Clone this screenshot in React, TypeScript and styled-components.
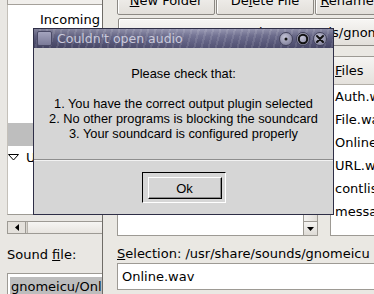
import React from 'react'
import styled, { createGlobalStyle } from 'styled-components'

const uiFont = `'DejaVu Sans', 'Bitstream Vera Sans', sans-serif`
const dialogFont = `'Liberation Sans', Arial, sans-serif`

const GlobalStyle = createGlobalStyle`
  html, body {
    margin: 0;
    padding: 0;
    background: #eae8e3;
    overflow: hidden;
  }
`

const Desktop = styled.div`
  position: relative;
  width: 374px;
  height: 294px;
  overflow: hidden;
  background: #eae8e3;
  font-family: ${uiFont};
  font-size: 13px;
  color: #000;
`

const Mn = styled.span`
  text-decoration: underline;
  text-underline-offset: 1px;
`

/* ---------- sound preferences window (left, behind) ---------- */

const PrefsWindow = styled.div`
  position: absolute;
  left: 0;
  top: 0;
  width: 220px;
  height: 294px;
  box-sizing: border-box;
  padding-left: 7px;
  background: #e9e7e3;
  display: flex;
  flex-direction: column;
`

const TopFrame = styled.div`
  height: 5px;
  flex: none;
  box-sizing: border-box;
  border-left: 1px solid #a5a19b;
  border-bottom: 1px solid #a5a19b;
  background: #f1efec;
`

const TreeView = styled.div`
  height: 210px;
  flex: none;
  box-sizing: border-box;
  padding-top: 3px;
  background: #fff;
  border-left: 1px solid #c4c0b9;
  border-bottom: 1px solid #9d9a94;
  display: flex;
  flex-direction: column;
  overflow: hidden;
`

const TreeRow = styled.div<{ $indent: number; $selected?: boolean }>`
  height: 23px;
  flex: none;
  display: flex;
  align-items: center;
  gap: 7px;
  padding-left: ${p => p.$indent}px;
  background: ${p => (p.$selected ? '#bebebe' : 'transparent')};
  white-space: nowrap;
`

const HScroll = styled.div`
  margin-top: 6px;
  height: 13px;
  flex: none;
  box-sizing: border-box;
  border: 1px solid #9d9a94;
  background: #d9d6d0;
  display: flex;
`

const ScrollArrow = styled.div<{ $side: 'left' | 'right' }>`
  width: 17px;
  flex: none;
  display: flex;
  align-items: center;
  justify-content: center;
  background: #e4e1dc;
  border-${p => (p.$side === 'left' ? 'right' : 'left')}: 1px solid #9d9a94;
`

const ScrollThumb = styled.div`
  flex: 1;
  margin: 0 0 0 1px;
  background: linear-gradient(#f6f5f3, #e8e5e0);
  border-left: 1px solid #b8b4ad;
`

const FieldLabel = styled.div<{ $gap: number }>`
  margin-top: ${p => p.$gap}px;
  height: 15px;
  line-height: 15px;
  flex: none;
  white-space: nowrap;
`

const Entry = styled.div<{ $gap: number }>`
  margin-top: ${p => p.$gap}px;
  height: 27px;
  flex: none;
  box-sizing: border-box;
  border: 1px solid #9d9a94;
  background: #fff;
  display: flex;
  align-items: center;
  padding-left: 4px;
  white-space: nowrap;
  overflow: hidden;
`

const PrefsEntry = styled(Entry)`
  align-items: flex-start;
  padding: 3px 0 0 2px;
`

const Highlight = styled.span`
  background: #bdbdbd;
  line-height: 19px;
  padding: 0 1px;
`

/* ---------- file chooser window (middle) ---------- */

const ChooserWindow = styled.div`
  position: absolute;
  left: 102px;
  top: -14px;
  width: 300px;
  height: 320px;
  box-sizing: border-box;
  border-left: 1px solid #6f6c67;
  background: #eae8e3;
  padding-left: 14px;
  display: flex;
  flex-direction: column;
`

const ButtonRow = styled.div`
  display: flex;
  gap: 1px;
  height: 29px;
  flex: none;
`

const GtkButton = styled.div<{ $width: number }>`
  width: ${p => p.$width}px;
  flex: none;
  box-sizing: border-box;
  border: 1px solid #8c8984;
  border-radius: 2px;
  background: linear-gradient(#f7f6f4, #e2dfda);
  box-shadow: inset 1px 1px 0 #fff;
  display: flex;
  align-items: center;
  justify-content: center;
  white-space: nowrap;
  overflow: hidden;
`

const Combo = styled(GtkButton)`
  margin: 3px 0 0 1px;
  height: 28px;
  justify-content: flex-start;
  padding-left: 104px;
`

const Lists = styled.div`
  margin-top: 10px;
  height: 180px;
  flex: none;
  display: flex;
`

const FolderList = styled.div`
  width: 187px;
  flex: none;
  box-sizing: border-box;
  border: 1px solid #9d9a94;
  background: #fff;
`

const VScroll = styled.div`
  width: 14px;
  flex: none;
  box-sizing: border-box;
  border: 1px solid #9d9a94;
  border-left: none;
  background: #d2cfc9;
  display: flex;
  flex-direction: column;
  justify-content: flex-end;
`

const VThumb = styled.div`
  height: 8px;
  background: linear-gradient(90deg, #f4f3f1, #e2dfda);
  border-bottom: 1px solid #9d9a94;
`

const VArrow = styled.div`
  height: 13px;
  display: flex;
  align-items: center;
  justify-content: center;
  background: linear-gradient(#f4f3f1, #dedbd6);
`

const FilesList = styled.div`
  margin-left: 12px;
  flex: 1;
  box-sizing: border-box;
  border: 1px solid #9d9a94;
  background: #fff;
  display: flex;
  flex-direction: column;
`

const FilesHeader = styled.div`
  height: 28px;
  flex: none;
  box-sizing: border-box;
  padding-left: 4px;
  display: flex;
  align-items: center;
  background: linear-gradient(#f5f4f2, #e4e1dc);
  border-bottom: 1px solid #b3afa8;
`

const FileRow = styled.div`
  height: 23px;
  flex: none;
  padding-left: 4px;
  display: flex;
  align-items: center;
  white-space: nowrap;
`

/* ---------- alert dialog (front) ---------- */

const Alert = styled.div`
  position: absolute;
  left: 33px;
  top: 28px;
  width: 301px;
  height: 187px;
  box-sizing: border-box;
  border: 1px solid #2e2e46;
  background: #d6d6d6;
  display: flex;
  flex-direction: column;
  font-family: ${dialogFont};
`

const TitleBar = styled.div`
  height: 19px;
  flex: none;
  display: flex;
  align-items: center;
  padding: 0 6px 0 3px;
  background:
    repeating-linear-gradient(104deg, rgba(255, 255, 255, 0) 0 5px, rgba(255, 255, 255, 0.1) 5px 7px),
    linear-gradient(90deg, rgba(0, 0, 0, 0.12), rgba(255, 255, 255, 0.06) 55%, rgba(0, 0, 0, 0.08)),
    linear-gradient(#9494b0 0%, #6c6c8e 35%, #58587c 70%, #4a4a6c 100%);
`

const TitleIcon = styled.div`
  width: 15px;
  height: 15px;
  flex: none;
  box-sizing: border-box;
  border: 1px solid #4a4a66;
  border-radius: 2px;
  background: linear-gradient(#a4a4be, #7a7a98);
`

const TitleText = styled.div`
  flex: 1;
  margin-left: 5px;
  font-family: ${uiFont};
  font-size: 12.5px;
  color: #cacadc;
  white-space: nowrap;
`

const TitleButtons = styled.div`
  display: flex;
  gap: 3px;
`

const TitleButton = styled.div`
  width: 14px;
  height: 14px;
  box-sizing: border-box;
  border-radius: 50%;
  border: 1px solid #44445c;
  background: radial-gradient(circle at 40% 35%, #c4c4d6, #8a8aa4 70%);
  display: flex;
  align-items: center;
  justify-content: center;
`

const Message = styled.div`
  flex: 1;
  padding-top: 18px;
  text-align: center;
  font-size: 12.8px;
  line-height: 15px;
  white-space: pre-line;
  color: #000;
`

const Separator = styled.div`
  height: 0;
  flex: none;
  border-top: 1px solid #8e8e8e;
  border-bottom: 1px solid #f2f2f2;
`

const Actions = styled.div`
  height: 53px;
  flex: none;
  display: flex;
  align-items: center;
  justify-content: center;
`

const DefaultFrame = styled.div`
  width: 84px;
  height: 31px;
  box-sizing: border-box;
  padding: 4px 3px 3px 5px;
  border-top: 1px solid #000;
  border-left: 1px solid #000;
  border-right: 1px solid #fff;
  border-bottom: 1px solid #fff;
`

const PushButton = styled.div`
  width: 74px;
  height: 22px;
  box-sizing: border-box;
  border-top: 1px solid #fff;
  border-left: 1px solid #fff;
  border-right: 1px solid #000;
  border-bottom: 1px solid #000;
  box-shadow: inset -1px -1px 0 #8c8c8c;
  background: #d6d6d6;
  display: flex;
  align-items: center;
  justify-content: center;
  font-size: 13px;
`

const treeRows = [
  'Incoming Message',
  'Outgoing Message',
  'User Online',
  'User Offline',
  'Authorization',
  'System Message',
]

const files = ['Auth.wav', 'File.wav', 'Online.wav', 'URL.wav', 'contlist.wav', 'message.wav']

const message = `Please check that:

1. You have the correct output plugin selected
2. No other programs is blocking the soundcard
3. Your soundcard is configured properly`

const ExpanderIcon = () => (
  <svg width="11" height="7" viewBox="0 0 11 7">
    <path d="M0.5 0.5 H10.5 L5.5 6 Z" fill="none" stroke="#000" strokeWidth="1" />
  </svg>
)

const App: React.FC = () => (
  <Desktop>
    <GlobalStyle />

    <PrefsWindow>
      <TopFrame />
      <TreeView>
        {treeRows.map((row, i) => (
          <TreeRow key={row} $indent={32} $selected={i === 5}>
            {row}
          </TreeRow>
        ))}
        <TreeRow $indent={0}>
          <ExpanderIcon />
          <span>User Events</span>
        </TreeRow>
        <TreeRow $indent={32}>Contact List</TreeRow>
        <TreeRow $indent={32}>Away Message</TreeRow>
      </TreeView>
      <HScroll>
        <ScrollArrow $side="left">
          <svg width="4" height="7" viewBox="0 0 4 7">
            <path d="M4 0 V7 L0 3.5 Z" fill="#000" />
          </svg>
        </ScrollArrow>
        <ScrollThumb />
      </HScroll>
      <FieldLabel $gap={13}>
        Sound <Mn>f</Mn>ile:
      </FieldLabel>
      <PrefsEntry $gap={11}>
        <Highlight>gnomeicu/Online.wav</Highlight>
      </PrefsEntry>
    </PrefsWindow>

    <ChooserWindow>
      <ButtonRow>
        <GtkButton $width={98}>
          <span>
            <Mn>N</Mn>ew Folder
          </span>
        </GtkButton>
        <GtkButton $width={98}>
          <span>
            De<Mn>l</Mn>ete File
          </span>
        </GtkButton>
        <GtkButton $width={90}>
          <span>
            <Mn>R</Mn>ename File
          </span>
        </GtkButton>
      </ButtonRow>
      <Combo $width={320}>/usr/share/sounds/gnomeicu</Combo>
      <Lists>
        <FolderList />
        <VScroll>
          <VThumb />
          <VArrow>
            <svg width="7" height="4" viewBox="0 0 7 4">
              <path d="M0 0 H7 L3.5 4 Z" fill="#000" />
            </svg>
          </VArrow>
        </VScroll>
        <FilesList>
          <FilesHeader>
            <span>
              <Mn>F</Mn>iles
            </span>
          </FilesHeader>
          {files.map(f => (
            <FileRow key={f}>{f}</FileRow>
          ))}
        </FilesList>
      </Lists>
      <FieldLabel $gap={10}>
        <Mn>S</Mn>election: /usr/share/sounds/gnomeicu
      </FieldLabel>
      <Entry $gap={2}>Online.wav</Entry>
    </ChooserWindow>

    <Alert>
      <TitleBar>
        <TitleIcon />
        <TitleText>Couldn't open audio</TitleText>
        <TitleButtons>
          <TitleButton>
            <svg width="12" height="12" viewBox="0 0 12 12">
              <circle cx="6" cy="6" r="1.5" fill="#111" />
            </svg>
          </TitleButton>
          <TitleButton>
            <svg width="12" height="12" viewBox="0 0 12 12">
              <circle cx="6" cy="6" r="4.2" fill="none" stroke="#111" strokeWidth="2" />
            </svg>
          </TitleButton>
          <TitleButton>
            <svg width="12" height="12" viewBox="0 0 12 12">
              <path d="M3 3 L9 9 M9 3 L3 9" stroke="#111" strokeWidth="2" strokeLinecap="round" />
            </svg>
          </TitleButton>
        </TitleButtons>
      </TitleBar>
      <Message>{message}</Message>
      <Separator />
      <Actions>
        <DefaultFrame>
          <PushButton>Ok</PushButton>
        </DefaultFrame>
      </Actions>
    </Alert>
  </Desktop>
)

export default App
